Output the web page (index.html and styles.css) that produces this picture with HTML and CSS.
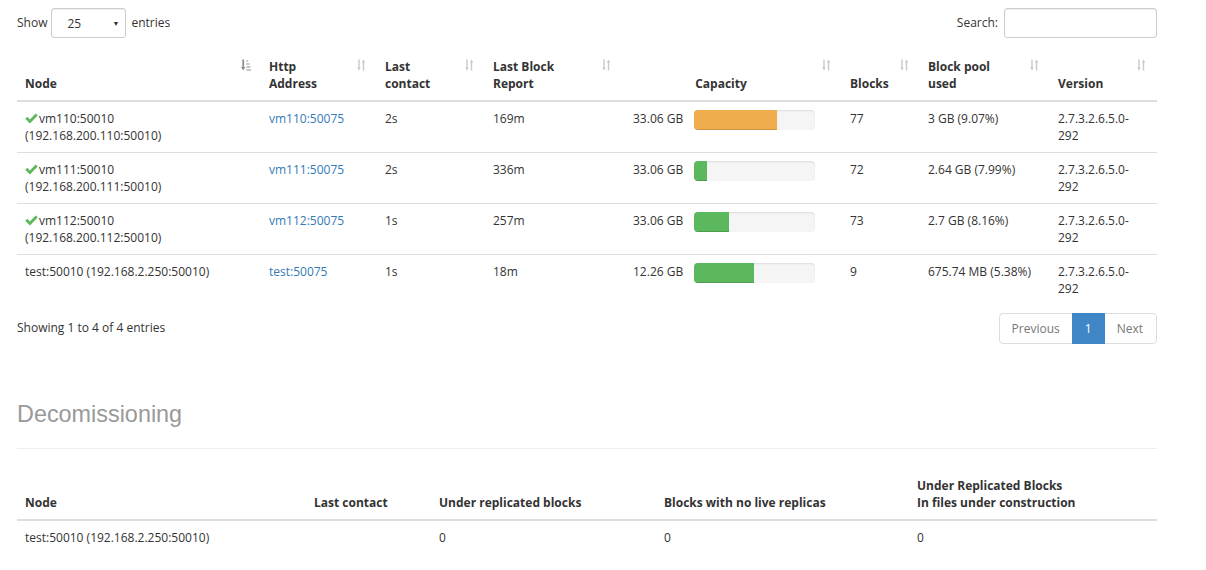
FILE: index.html
```html
<!DOCTYPE html>
<html>
<head>
<meta charset="utf-8">
<link rel="stylesheet" href="styles.css">
</head>
<body>
<div class="container">
  <div class="dt-top">
    <div class="length">Show <span class="select"><span>25</span><span class="caret">&#9660;</span></span> entries</div>
    <div class="filter">Search: <span class="search-input"></span></div>
  </div>

  <table class="table dn-table">
    <colgroup>
      <col style="width:244px"><col style="width:116px"><col style="width:108px"><col style="width:137px">
      <col style="width:220px"><col style="width:78px"><col style="width:130px"><col style="width:107px">
    </colgroup>
    <thead>
      <tr>
        <th class="sorted">Node<svg class="sort" viewBox="0 0 10 12"><path d="M2.2 0.5v8.5" stroke="#8f8f8f" stroke-width="1.8" fill="none"/><path d="M0 8l2.2 3.6 2.2-3.6z" fill="#8f8f8f"/><rect x="5.4" y="1" width="1.8" height="2" fill="#c6c6c6"/><rect x="5.4" y="4" width="3" height="2" fill="#c6c6c6"/><rect x="5.4" y="7" width="4" height="2" fill="#c6c6c6"/><rect x="5.4" y="10" width="4.6" height="2" fill="#c6c6c6"/></svg></th>
        <th>Http<br>Address<svg class="sort un" viewBox="0 0 10 12"><path d="M2 0.5v9M6.5 2.5v9" stroke="#c9c9c9" stroke-width="1.4" fill="none"/><path d="M0.3 8.5l1.7 3 1.7-3zM4.8 3.5l1.7-3 1.7 3z" fill="#c9c9c9"/></svg></th>
        <th>Last<br>contact<svg class="sort un" viewBox="0 0 10 12"><path d="M2 0.5v9M6.5 2.5v9" stroke="#c9c9c9" stroke-width="1.4" fill="none"/><path d="M0.3 8.5l1.7 3 1.7-3zM4.8 3.5l1.7-3 1.7 3z" fill="#c9c9c9"/></svg></th>
        <th>Last Block<br>Report<svg class="sort un" viewBox="0 0 10 12"><path d="M2 0.5v9M6.5 2.5v9" stroke="#c9c9c9" stroke-width="1.4" fill="none"/><path d="M0.3 8.5l1.7 3 1.7-3zM4.8 3.5l1.7-3 1.7 3z" fill="#c9c9c9"/></svg></th>
        <th class="center">Capacity<svg class="sort un" viewBox="0 0 10 12"><path d="M2 0.5v9M6.5 2.5v9" stroke="#c9c9c9" stroke-width="1.4" fill="none"/><path d="M0.3 8.5l1.7 3 1.7-3zM4.8 3.5l1.7-3 1.7 3z" fill="#c9c9c9"/></svg></th>
        <th>Blocks<svg class="sort un" viewBox="0 0 10 12"><path d="M2 0.5v9M6.5 2.5v9" stroke="#c9c9c9" stroke-width="1.4" fill="none"/><path d="M0.3 8.5l1.7 3 1.7-3zM4.8 3.5l1.7-3 1.7 3z" fill="#c9c9c9"/></svg></th>
        <th>Block pool<br>used<svg class="sort un" viewBox="0 0 10 12"><path d="M2 0.5v9M6.5 2.5v9" stroke="#c9c9c9" stroke-width="1.4" fill="none"/><path d="M0.3 8.5l1.7 3 1.7-3zM4.8 3.5l1.7-3 1.7 3z" fill="#c9c9c9"/></svg></th>
        <th>Version<svg class="sort un" viewBox="0 0 10 12"><path d="M2 0.5v9M6.5 2.5v9" stroke="#c9c9c9" stroke-width="1.4" fill="none"/><path d="M0.3 8.5l1.7 3 1.7-3zM4.8 3.5l1.7-3 1.7 3z" fill="#c9c9c9"/></svg></th>
      </tr>
    </thead>
    <tbody>
      <tr>
        <td><svg class="ok" viewBox="0 0 13 11"><path d="M0.3 5.8L2.3 3.8 4.9 6.4 10.7 0.6 12.7 2.6 4.9 10.4Z" fill="#5cb85c"/></svg>vm110:50010<br>(192.168.200.110:50010)</td>
        <td><a href="#">vm110:50075</a></td>
        <td>2s</td>
        <td>169m</td>
        <td><div class="cap"><span class="cap-text">33.06 GB</span><div class="progress"><div class="bar warn" style="width:69%"></div></div></div></td>
        <td>77</td>
        <td>3 GB (9.07%)</td>
        <td>2.7.3.2.6.5.0-<br>292</td>
      </tr>
      <tr>
        <td><svg class="ok" viewBox="0 0 13 11"><path d="M0.3 5.8L2.3 3.8 4.9 6.4 10.7 0.6 12.7 2.6 4.9 10.4Z" fill="#5cb85c"/></svg>vm111:50010<br>(192.168.200.111:50010)</td>
        <td><a href="#">vm111:50075</a></td>
        <td>2s</td>
        <td>336m</td>
        <td><div class="cap"><span class="cap-text">33.06 GB</span><div class="progress"><div class="bar ok-bar" style="width:10.5%"></div></div></div></td>
        <td>72</td>
        <td>2.64 GB (7.99%)</td>
        <td>2.7.3.2.6.5.0-<br>292</td>
      </tr>
      <tr>
        <td><svg class="ok" viewBox="0 0 13 11"><path d="M0.3 5.8L2.3 3.8 4.9 6.4 10.7 0.6 12.7 2.6 4.9 10.4Z" fill="#5cb85c"/></svg>vm112:50010<br>(192.168.200.112:50010)</td>
        <td><a href="#">vm112:50075</a></td>
        <td>1s</td>
        <td>257m</td>
        <td><div class="cap"><span class="cap-text">33.06 GB</span><div class="progress"><div class="bar ok-bar" style="width:29%"></div></div></div></td>
        <td>73</td>
        <td>2.7 GB (8.16%)</td>
        <td>2.7.3.2.6.5.0-<br>292</td>
      </tr>
      <tr>
        <td>test:50010 (192.168.2.250:50010)</td>
        <td><a href="#">test:50075</a></td>
        <td>1s</td>
        <td>18m</td>
        <td><div class="cap"><span class="cap-text">12.26 GB</span><div class="progress"><div class="bar ok-bar" style="width:49.6%"></div></div></div></td>
        <td>9</td>
        <td>675.74 MB (5.38%)</td>
        <td>2.7.3.2.6.5.0-<br>292</td>
      </tr>
    </tbody>
  </table>

  <div class="dt-bottom">
    <div class="info">Showing 1 to 4 of 4 entries</div>
    <ul class="pagination">
      <li class="disabled"><a href="#">Previous</a></li>
      <li class="active"><a href="#">1</a></li>
      <li class="disabled"><a href="#">Next</a></li>
    </ul>
  </div>

  <div class="page-header"><h1><small>Decomissioning</small></h1></div>

  <table class="table dec-table">
    <colgroup>
      <col style="width:289px"><col style="width:125px"><col style="width:225px"><col style="width:253px"><col style="width:248px">
    </colgroup>
    <thead>
      <tr>
        <th>Node</th>
        <th>Last contact</th>
        <th>Under replicated blocks</th>
        <th>Blocks with no live replicas</th>
        <th>Under Replicated Blocks<br>In files under construction</th>
      </tr>
    </thead>
    <tbody>
      <tr>
        <td>test:50010 (192.168.2.250:50010)</td>
        <td></td>
        <td>0</td>
        <td>0</td>
        <td>0</td>
      </tr>
    </tbody>
  </table>
</div>
</body>
</html>
```

FILE: styles.css
```css
* { box-sizing: border-box; }
html, body { margin: 0; padding: 0; background: #fff; }
body {
  font-family: "Open Sans", "Noto Sans", sans-serif;
  font-size: 12px;
  line-height: 17px;
  color: #333;
}
a { color: #337ab7; text-decoration: none; }

.container { width: 1140px; margin-left: 17px; }

.dt-top {
  display: flex;
  justify-content: space-between;
  align-items: center;
  padding-top: 8px;
  height: 38px;
}
.length, .filter { display: flex; align-items: center; line-height: 14px; padding-bottom: 1px; }
.select {
  display: inline-flex;
  align-items: center;
  justify-content: space-between;
  width: 75px;
  height: 30px;
  margin: 0 5px 0 4px;
  padding: 2px 6px 0 15px;
  border: 1px solid #ccc;
  border-radius: 3px;
  box-shadow: inset 0 1px 1px rgba(0,0,0,.075);
}
.caret { font-size: 7px; color: #333; }
.search-input {
  display: inline-block;
  width: 153px;
  height: 30px;
  margin-left: 6px;
  border: 1px solid #ccc;
  border-radius: 3px;
  box-shadow: inset 0 1px 1px rgba(0,0,0,.075);
}

.table {
  width: 1140px;
  border-collapse: collapse;
  table-layout: fixed;
}
.dn-table { margin-top: 12px; margin-bottom: 6px; }
.table th {
  position: relative;
  text-align: left;
  vertical-align: bottom;
  font-weight: bold;
  padding: 8px;
  border-bottom: 2px solid #ddd;
}
.dn-table th { padding-right: 30px; }
.dn-table th.center { text-align: center; }
.table td {
  vertical-align: top;
  padding: 8px;
  border-top: 1px solid #ddd;
}
.table tbody tr:first-child td { border-top: 0; }

.sort {
  position: absolute;
  top: 9px;
  right: 10px;
  width: 10px;
  height: 12px;
}
.ok {
  width: 13px;
  height: 11px;
  vertical-align: -1px;
  margin-right: 1px;
}

.cap { display: flex; align-items: flex-start; }
.cap-text { width: 64px; padding-left: 3px; }
.progress {
  width: 121px;
  height: 20px;
  background: #f5f5f5;
  border-radius: 4px;
  overflow: hidden;
  box-shadow: inset 0 1px 2px rgba(0,0,0,.1);
}
.bar { height: 100%; box-shadow: inset 0 -1px 0 rgba(0,0,0,.15); }
.bar.warn { background: #f0ad4e; }
.bar.ok-bar { background: #5cb85c; }

.dt-bottom {
  display: flex;
  justify-content: space-between;
  align-items: flex-start;
}
.info { padding-top: 8px; }
.pagination {
  display: flex;
  list-style: none;
  margin: 2px 0;
  padding: 0;
}
.pagination li a {
  display: block;
  padding: 6px 12px;
  line-height: 17px;
  border: 1px solid #ddd;
  margin-left: -1px;
  color: #777;
  background: #fff;
}
.pagination li:first-child a { margin-left: 0; border-radius: 4px 0 0 4px; }
.pagination li:last-child a { border-radius: 0 4px 4px 0; padding-right: 13px; }
.pagination li.active a {
  background: #3f86c6;
  border-color: #3f86c6;
  color: #fff;
  position: relative;
}

.page-header {
  margin-top: 55px;
  padding-bottom: 21px;
  border-bottom: 1px solid #eee;
}
.page-header h1 {
  margin: 0;
  font-family: "Liberation Sans", Arial, sans-serif;
  font-weight: normal;
  font-size: 23.4px;
  line-height: 26px;
}
.page-header small { font-size: 23.4px; color: #999; }

.dec-table { margin-top: 20px; }
```
